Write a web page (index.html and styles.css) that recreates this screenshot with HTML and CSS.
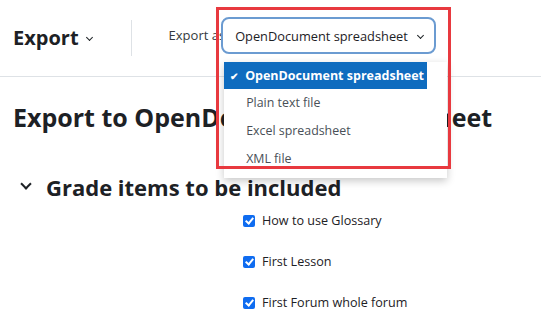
FILE: index.html
```html
<!DOCTYPE html>
<html>
<head>
    <meta charset="UTF-8">
    <title>Export</title>
    <link rel="stylesheet" href="styles.css">
</head>
<body>
    <div class="page">
        <div class="topbar">
            <div class="pagetitle">Export <span class="caret small"></span></div>
            <div class="divider"></div>
            <div class="exportas">
                <span class="label">Export as</span>
                <div class="selectwrap">
                    <div class="select">OpenDocument spreadsheet <span class="caret small"></span></div>
                    <ul class="options">
                        <li class="selected"><span class="tick">&#10004;</span>OpenDocument spreadsheet</li>
                        <li>Plain text file</li>
                        <li>Excel spreadsheet</li>
                        <li>XML file</li>
                    </ul>
                </div>
            </div>
        </div>

        <h2 class="heading">Export to OpenDocument spreadsheet</h2>

        <h3 class="section"><span class="caret big"></span>Grade items to be included</h3>

        <ul class="items">
            <li><span class="check"></span>How to use Glossary</li>
            <li><span class="check"></span>First Lesson</li>
            <li><span class="check"></span>First Forum whole forum</li>
        </ul>

        <div class="highlight"></div>
    </div>
</body>
</html>
```

FILE: styles.css
```css
html, body {
    margin: 0;
    padding: 0;
    background: #fff;
}

body {
    font-family: "Open Sans", "Noto Sans", sans-serif;
    color: #1d2125;
    width: 541px;
    height: 324px;
    overflow: hidden;
}

.page {
    position: relative;
}

.topbar {
    display: flex;
    align-items: center;
    height: 76px;
    border-bottom: 1px solid #dee2e6;
    padding-left: 13px;
}

.pagetitle {
    font-size: 20px;
    font-weight: 700;
    display: flex;
    align-items: center;
    gap: 8px;
    margin-top: -2px;
}

.divider {
    width: 1px;
    height: 36px;
    background: #dee2e6;
    margin: 0 37px 0 39px;
}

.exportas {
    display: flex;
    align-items: center;
    margin-top: -5px;
}

.exportas .label {
    font-size: 13px;
    color: #343a40;
    white-space: nowrap;
    margin-top: -2px;
}

.selectwrap {
    position: relative;
    margin-left: -4px;
}

.select {
    box-sizing: border-box;
    width: 215px;
    height: 37px;
    border: 2px solid #6b9bd1;
    border-radius: 8px;
    background: #fff;
    font-size: 12.8px;
    padding-left: 12px;
    display: flex;
    align-items: center;
    gap: 10px;
    white-space: nowrap;
    color: #1d2125;
}

.caret {
    width: 5px;
    height: 5px;
    border-right: 2px solid #1d2125;
    border-bottom: 2px solid #1d2125;
    transform: rotate(45deg);
    margin-top: -4px;
    display: inline-block;
}

.caret.small {
    width: 4px;
    height: 4px;
    border-width: 0 1.5px 1.5px 0;
    margin-top: 0;
}

.caret.big {
    width: 6px;
    height: 6px;
    border-width: 0 2.5px 2.5px 0;
    margin: -6px 16px 0 4px;
}

.options {
    position: absolute;
    top: 45px;
    left: 3px;
    width: 223px;
    margin: 0;
    padding: 0 0 5px;
    list-style: none;
    background: #fff;
    box-shadow: 0 3px 8px rgba(0, 0, 0, 0.22);
    z-index: 5;
}

.options li {
    height: 28px;
    line-height: 28px;
    font-size: 12.4px;
    color: #495057;
    padding-left: 22px;
    white-space: nowrap;
}

.options li.selected {
    height: 27px;
    line-height: 27px;
    background: #0f6cbf;
    color: #fff;
    font-weight: 700;
    font-size: 12.5px;
    padding-left: 6px;
    margin-right: 20px;
}

.tick {
    display: inline-block;
    width: 15px;
    font-size: 10px;
}

.heading {
    font-size: 25px;
    font-weight: 700;
    margin: 25px 0 0 13px;
    line-height: 30px;
}

.section {
    font-size: 22px;
    font-weight: 700;
    margin: 42px 0 0 18px;
    display: flex;
    align-items: center;
    line-height: 26px;
}

.items {
    list-style: none;
    margin: 0;
    padding: 0 0 0 243px;
}

.items li {
    display: flex;
    align-items: center;
    height: 41px;
    font-size: 12.6px;
    color: #1d2125;
}

.check {
    box-sizing: border-box;
    width: 12px;
    height: 12px;
    border-radius: 2px;
    background: #0f6cf0;
    margin-right: 7px;
    position: relative;
}

.check::after {
    content: '';
    position: absolute;
    left: 3.5px;
    top: 1.5px;
    width: 3px;
    height: 6px;
    border-right: 2px solid #fff;
    border-bottom: 2px solid #fff;
    transform: rotate(40deg);
}

.highlight {
    position: absolute;
    left: 216px;
    top: 7px;
    width: 229px;
    height: 156px;
    border: 3px solid #e8393f;
    z-index: 10;
    pointer-events: none;
}
```
